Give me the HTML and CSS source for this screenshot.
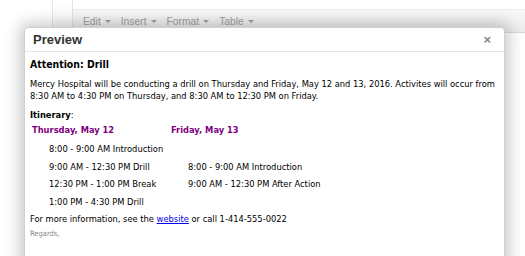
FILE: index.html
```html
<!DOCTYPE html>
<html>
<head>
<meta charset="utf-8">
<link rel="stylesheet" href="styles.css">
</head>
<body>
<div class="stage">
  <div class="editor">
    <div class="gutter"></div>
    <div class="toolbar">
      <span class="menu">Edit <i class="caret"></i></span>
      <span class="menu">Insert <i class="caret"></i></span>
      <span class="menu">Format <i class="caret"></i></span>
      <span class="menu">Table <i class="caret"></i></span>
    </div>
  </div>
  <div class="modal">
    <div class="modal-head">
      <span class="title">Preview</span>
      <span class="close">×</span>
    </div>
    <div class="modal-body">
      <h3 class="h">Attention: Drill</h3>
      <p class="p">Mercy Hospital will be conducting a drill on Thursday and Friday, May 12 and 13, 2016. Activites will occur from 8:30 AM to 4:30 PM on Thursday, and 8:30 AM to 12:30 PM on Friday.</p>
      <p class="p itin"><b>Itinerary</b>:</p>
      <div class="cols">
        <div class="col">
          <div class="day">Thursday, May 12</div>
          <div class="item">8:00 - 9:00 AM Introduction</div>
          <div class="item">9:00 AM - 12:30 PM Drill</div>
          <div class="item">12:30 PM - 1:00 PM Break</div>
          <div class="item">1:00 PM - 4:30 PM Drill</div>
        </div>
        <div class="col">
          <div class="day">Friday, May 13</div>
          <div class="item empty"></div>
          <div class="item">8:00 - 9:00 AM Introduction</div>
          <div class="item">9:00 AM - 12:30 PM After Action</div>
        </div>
      </div>
      <p class="p more">For more information, see the <a href="#">website</a> or call 1-414-555-0022</p>
      <p class="regards">Regards,</p>
    </div>
  </div>
</div>
</body>
</html>
```
FILE: styles.css
```css
html, body { margin: 0; padding: 0; background: #fff; }
.stage { position: relative; width: 525px; height: 256px; overflow: hidden; font-family: "DejaVu Sans Condensed", "DejaVu Sans", Verdana, sans-serif; }
.editor { display: flex; height: 40px; padding-left: 52px; }
.gutter { width: 19px; border-left: 1px solid #e6e6e6; border-right: 1px solid #e2e2e2; background: linear-gradient(#fff, #f4f4f4); }
.toolbar { flex: 1; margin-top: 9px; height: 22px; display: flex; align-items: center; padding-left: 10px; background: linear-gradient(#f8f8f8, #ececec); border-top: 1px solid #eee; border-bottom: 1px solid #d8d8d8; font-family: "Liberation Sans", Arial, sans-serif; font-size: 10.3px; color: #a0a0a0; }
.menu { margin-right: 10px; display: inline-flex; align-items: center; }
.caret { display: inline-block; width: 0; height: 0; border-left: 3px solid transparent; border-right: 3px solid transparent; border-top: 3px solid #a0a0a0; margin-left: 4px; }
.modal { position: absolute; left: 24px; top: 27px; width: 479px; height: 260px; background: #fff; border: 1px solid #d0d0d0; border-radius: 4px 4px 0 0; box-shadow: 0 0 16px 4px rgba(0,0,0,0.22); }
.modal-head { height: 23px; display: flex; align-items: center; justify-content: space-between; padding: 0 13px 0 8px; border-bottom: 1px solid #e5e5e5; }
.title { font-family: "Liberation Sans", Arial, sans-serif; font-weight: bold; font-size: 13px; color: #333; }
.close { font-family: "Liberation Sans", Arial, sans-serif; font-weight: bold; font-size: 13px; color: #888; }
.modal-body { padding: 4px 5px 0 5px; color: #000; font-size: 9.25px; }
.h { margin: 0 0 6px; font-size: 10.4px; font-weight: bold; line-height: 16px; }
.p { margin: 0; line-height: 12px; font-size: 9.25px; }
.itin { margin-top: 7px; }
.cols { display: flex; margin-top: 3px; }
.col:first-child { width: 139px; }
.day { color: #800080; font-weight: bold; font-size: 9.25px; line-height: 12px; padding-left: 2px; margin-bottom: 7px; }
.item { padding-left: 19px; line-height: 12px; height: 12px; margin-bottom: 5.5px; }
.more { margin-top: 0; }
.more a { color: #00e; }
.regards { margin: 4px 0 0; font-size: 7.5px; line-height: 10px; color: #888; }
```
